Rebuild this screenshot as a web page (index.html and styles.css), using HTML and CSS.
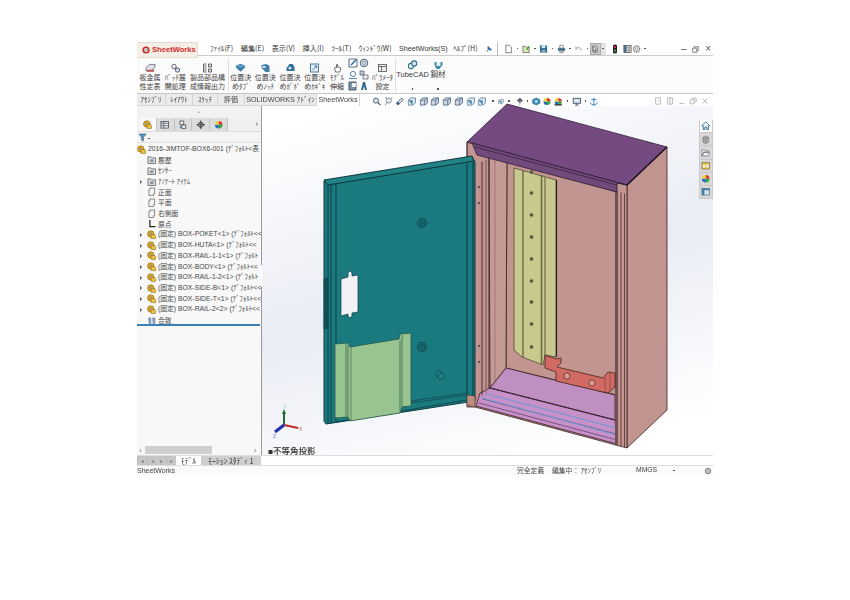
FILE: index.html
```html
<!DOCTYPE html>
<html lang="ja">
<head>
<meta charset="utf-8">
<title>SheetWorks</title>
<link rel="stylesheet" href="styles.css">
</head>
<body>
<svg class="defs" width="0" height="0">
  <defs>
    <symbol id="cube" viewBox="0 0 10 10"><path d="M1 3.5 4 1h5v5.5L6 9H1z" fill="#cfd8e2" stroke="#3f5f7f" stroke-width=".9"/><path d="M1 3.5h5V9M6 3.5 9 1" fill="none" stroke="#3f5f7f" stroke-width=".8"/></symbol>
    <symbol id="cubeb" viewBox="0 0 10 10"><path d="M1 3.5 4 1h5v5.5L6 9H1z" fill="#e4ebf2" stroke="#517792" stroke-width=".9"/><path d="M1 3.5h5V9z" fill="#4e86b0"/></symbol>
    <symbol id="plane" viewBox="0 0 10 10"><path d="M3 1h5v6H7v2H2V3h1z" fill="#f4f4f4" stroke="#666" stroke-width=".8"/></symbol>
    <symbol id="folder" viewBox="0 0 10 10"><path d="M1 2h3l1 1h4v6H1z" fill="#e5e5e5" stroke="#555" stroke-width=".8"/><path d="M3 4.5h4v3H3z" fill="#8d99a8"/></symbol>
    <symbol id="asm" viewBox="0 0 10 10"><circle cx="4" cy="4.2" r="3.4" fill="#e8a817" stroke="#80610e" stroke-width=".6"/><path d="M4 5 8 4.600l1.600 2.400-1.200 2.400-3.800-.4z" fill="#e8c24a" stroke="#80610e" stroke-width=".6"/><circle cx="3.6" cy="3.7" r="1.2" fill="#6f95c2"/></symbol>
    <symbol id="blue" viewBox="0 0 12 10"><path d="M1 2 6 .7 11 2v2.5L6 9 1 4.5z" fill="#3f7fa8"/><path d="M1 2 6 3.5 11 2" fill="none" stroke="#bcd8e8" stroke-width=".7"/></symbol>
    <symbol id="sheet" viewBox="0 0 12 10"><path d="M1 5 5 1h6v3L7 8H1z" fill="#dde" stroke="#445" stroke-width=".7"/><path d="M2 7h8v2H2z" fill="#b55"/></symbol>
    <symbol id="grid" viewBox="0 0 10 10"><rect x="1" y="1.5" width="8" height="7" fill="#eee" stroke="#555" stroke-width=".8"/><path d="M1 3.5h8M4 3.5v5" stroke="#555" stroke-width=".8"/></symbol>
    <symbol id="tube" viewBox="0 0 10 10"><circle cx="3.5" cy="6" r="2.6" fill="#fff" stroke="#2e6c92" stroke-width="1.1"/><circle cx="6.7" cy="3.5" r="2.6" fill="#d7e6f0" stroke="#2e6c92" stroke-width="1.1"/></symbol>
    <symbol id="color" viewBox="0 0 10 10"><path d="M5 1a4 4 0 0 1 4 4H5z" fill="#d33"/><path d="M9 5a4 4 0 0 1-4 4V5z" fill="#3a3"/><path d="M5 9a4 4 0 0 1-4-4h4z" fill="#26c"/><path d="M1 5a4 4 0 0 1 4-4v4z" fill="#ec3"/></symbol>
  </defs>
</svg>

<div class="app">
  <header class="titlebar">
    <div class="logo"><svg class="logo-ic" viewBox="0 0 10 10"><circle cx="5" cy="5" r="3.5" fill="none" stroke="#c62828" stroke-width="2"/><path d="M2 7 8 3" stroke="#888" stroke-width="1.3"/></svg><span>SheetWorks</span></div>
    <nav class="menu">
      <span>ﾌｧｲﾙ(F)</span><span>編集(E)</span><span>表示(V)</span><span>挿入(I)</span><span>ﾂｰﾙ(T)</span><span>ｳｨﾝﾄﾞｳ(W)</span><span class="m-s">SheetWorks(S)</span><span class="m-h">ﾍﾙﾌﾟ(H)</span>
    </nav>
    <div class="quick">
      <svg class="q pin" viewBox="0 0 10 10"><path d="M2 8 5 5M4 2l4 4-2 .5L3.5 4z" stroke="#2a6fb0" stroke-width="1.2" fill="#2a6fb0"/></svg>
      <i class="vsep"></i>
      <svg class="q" viewBox="0 0 10 10"><path d="M2 .8h4l2.2 2.2v6.2H2z" fill="#fff" stroke="#555" stroke-width=".8"/></svg><b class="dot"></b>
      <svg class="q" viewBox="0 0 10 10"><path d="M1 2h3l1 1h3v6H1z" fill="#e8e4b8" stroke="#555" stroke-width=".8"/><path d="M5 6 8 2" stroke="#3a3" stroke-width="1.5"/></svg><b class="dot"></b>
      <svg class="q" viewBox="0 0 10 10"><path d="M1 1h8v8H1z" fill="#2f6f96"/><path d="M3 1h4v3H3z" fill="#dfe9f0"/><path d="M3 6h4v3H3z" fill="#9ab"/></svg><b class="dot"></b>
      <svg class="q" viewBox="0 0 10 10"><path d="M3 1h4v3H3z" fill="#fff" stroke="#555" stroke-width=".7"/><path d="M1 4h8v3H1z" fill="#3d7199"/><path d="M3 7h4v2H3z" fill="#ddd" stroke="#555" stroke-width=".6"/></svg><b class="dot"></b>
      <svg class="q" viewBox="0 0 10 10"><path d="M2 5a3 3 0 0 1 5-1l1 3M2 2v3h3" fill="none" stroke="#bbb" stroke-width="1.2"/></svg><b class="dot"></b>
      <span class="hl"><svg class="q" viewBox="0 0 10 10"><path d="M2 1h5l1 2v6H2z" fill="none" stroke="#666" stroke-width=".7"/><path d="M3 2l4 4-2 .2L5.800 8.500 5 9 4 6.500 3 7.500z" fill="#fff" stroke="#222" stroke-width=".6"/></svg></span><span class="hl2"><b class="dot"></b></span>
      <svg class="q tl" viewBox="0 0 6 10"><rect x="1" y=".5" width="4" height="9" rx="1.5" fill="#222"/><circle cx="3" cy="3" r="1.1" fill="#e33"/><circle cx="3" cy="6.6" r="1.1" fill="#3b3"/></svg>
      <svg class="q" viewBox="0 0 10 10"><rect x="1" y="1" width="8" height="8" fill="#e6e6e6" stroke="#333" stroke-width=".7"/><path d="M1 1h3v8H1z" fill="#4a6a85"/><path d="M5 3h3M5 5h3M5 7h3" stroke="#333" stroke-width=".7"/></svg>
      <svg class="q" viewBox="0 0 10 10"><circle cx="5" cy="5" r="3.6" fill="#ddd" stroke="#777" stroke-width="1.2" stroke-dasharray="1.6 .7"/><circle cx="5" cy="5" r="1.4" fill="#fff" stroke="#777" stroke-width=".6"/></svg><b class="dot"></b>
    </div>
    <div class="winbtns"><span>–</span><svg class="wi" viewBox="0 0 8 8"><path d="M2.5 2.5V.8h4.7v4.4H5.5M.8 2.5h4.7v4.7H.8z" fill="none" stroke="#555" stroke-width=".8"/></svg><span>×</span></div>
  </header>

  <section class="ribbon">
    <div class="rb w26"><svg class="ri" viewBox="0 0 12 10"><use href="#sheet"/></svg><p>板金属<br>性定表</p></div>
    <div class="rb w24"><svg class="ri" viewBox="0 0 10 10"><circle cx="3.5" cy="3.5" r="2.2" fill="#fff" stroke="#445" stroke-width=".8"/><circle cx="7" cy="7" r="2.2" fill="#cfdce8" stroke="#445" stroke-width=".8"/><path d="M5 5l1 1" stroke="#445"/></svg><p>ﾊﾞｯﾁ展<br>開処理</p></div>
    <div class="rb w40"><svg class="ri" viewBox="0 0 10 10"><path d="M1 1h3M1 1v8h3M2 3h2M2 5h2M2 7h2M6 1h3v3H6zM6 6h3v3H6z" fill="#e8e8e8" stroke="#444" stroke-width=".8"/></svg><p>製品部品構<br>成情報出力</p></div>
    <i class="rsep"></i>
    <div class="rb w24"><svg class="ri" viewBox="0 0 12 10"><use href="#blue"/></svg><p>位置決<br>めﾀﾌﾞ</p></div>
    <div class="rb w24"><svg class="ri" viewBox="0 0 10 10"><path d="M1 2 6 1l3 2v6H5L1 5z" fill="#3f7fa8"/><path d="M2 3h3v2H2z" fill="#dce8f0"/></svg><p>位置決<br>めﾉｯﾁ</p></div>
    <div class="rb w25"><svg class="ri" viewBox="0 0 10 10"><path d="M1 8V5l3-4h3l2 3v4z" fill="#2f6d96"/><circle cx="4.5" cy="5" r="1.6" fill="#d0e0ea"/></svg><p>位置決<br>めｶﾞﾎﾞ</p></div>
    <div class="rb w24"><svg class="ri" viewBox="0 0 10 10"><rect x="1" y="1" width="8" height="8" fill="#e8eef4" stroke="#4a7a9a"/><path d="M3 7l4-4M5 3h2v2" stroke="#2f78a8" fill="none"/></svg><p>位置決<br>めｶｷﾞｷ</p></div>
    <div class="rb w20"><svg class="ri" viewBox="0 0 10 10"><path d="M3 9 2 5l1-1 1 1V1.5h1.2V4l3 1v2L7 9z" fill="#fff" stroke="#333" stroke-width=".7"/></svg><p>ﾓﾃﾞﾙ<br>伸縮</p></div>
    <div class="smallgrid">
      <svg viewBox="0 0 10 10"><path d="M1 1h8v8H1z" fill="#fff" stroke="#345" stroke-width=".8"/><path d="M3 7l5-5" stroke="#26a" stroke-width="1.4"/></svg>
      <svg viewBox="0 0 10 10"><circle cx="5" cy="5" r="3.8" fill="#cfdde6" stroke="#456" stroke-width=".9"/><circle cx="5" cy="5" r="1.5" fill="#fff" stroke="#456" stroke-width=".6"/></svg>
      <svg viewBox="0 0 10 10"><circle cx="5" cy="4" r="2.6" fill="#fff" stroke="#47a" stroke-width=".9"/><path d="M1 8.5h8" stroke="#47a" stroke-width=".9"/></svg>
      <svg viewBox="0 0 10 10"><path d="M1 1h4v4H1z" fill="#bcd" stroke="#456" stroke-width=".7"/><path d="M4 5h5v4H4z" fill="#eee" stroke="#456" stroke-width=".7"/></svg>
      <svg viewBox="0 0 10 10"><path d="M1 1h7v8H1z" fill="#7d98ad" stroke="#334" stroke-width=".8"/><path d="M4 2h4v4H4z" fill="#eee"/></svg>
      <svg viewBox="0 0 10 10"><path d="M2 9 4 1h2l2 8H6L5 5 4 9z" fill="#2a6a8c"/></svg>
    </div>
    <div class="rb w25"><svg class="ri" viewBox="0 0 10 10"><use href="#grid"/></svg><p>ﾊﾟﾗﾒｰﾀ<br>設定</p></div>
    <i class="rsep"></i>
    <div class="rb w33 solo"><svg class="ri" viewBox="0 0 10 10"><use href="#tube"/></svg><p class="big">TubeCAD</p><b class="dot"></b></div>
    <div class="rb w18 solo"><svg class="ri" viewBox="0 0 10 10"><path d="M1 2h8v3L6 9H3L1 5z" fill="#3f8aa8"/><path d="M3 2v4h4V2" fill="#e7f0f4"/></svg><p class="big">鋼材</p><b class="dot"></b></div>
  </section>

  <nav class="tabs">
    <span class="tab t29">ｱｾﾝﾌﾞﾘ</span><span class="tab t27">ﾚｲｱｳﾄ</span><span class="tab t25">ｽｹｯﾁ</span><span class="tab t27">評価</span><span class="tab t72">SOLIDWORKS ｱﾄﾞｲﾝ</span><span class="tab t43 on">SheetWorks</span>
  </nav>

  <main class="main">
    <aside class="side">
      <div class="grip">•</div>
      <div class="ptabs">
        <span class="ptab on"><svg viewBox="0 0 10 10"><use href="#asm"/></svg></span>
        <span class="ptab"><svg viewBox="0 0 10 10"><rect x="1" y="1.5" width="8" height="7" fill="#e8eef0" stroke="#445" stroke-width=".8"/><path d="M1 3.5h8M1 6h8M4 1.500v7" stroke="#445" stroke-width=".7"/></svg></span>
        <span class="ptab"><svg viewBox="0 0 10 10"><path d="M2 1h4v4H2zM4 5h4v4H4z" fill="#eee" stroke="#444" stroke-width=".8"/><circle cx="3" cy="7.500" r="1.200" fill="#4a86b0"/></svg></span>
        <span class="ptab"><svg viewBox="0 0 10 10"><circle cx="5" cy="5" r="2.600" fill="none" stroke="#333"/><path d="M5 .5v9M.5 5h9" stroke="#333"/></svg></span>
        <span class="ptab"><svg viewBox="0 0 10 10"><use href="#color"/></svg></span>
        <span class="more">›</span>
      </div>
      <div class="filter"><svg viewBox="0 0 10 10"><path d="M1 1h8L6 5v4L4 8V5z" fill="#4f93c2" stroke="#3a5a70" stroke-width=".6"/></svg><b class="dot"></b></div>
      <ul class="tree">
        <li class="root"><svg class="ti" viewBox="0 0 10 10"><use href="#asm"/></svg><span>2016-JIMTOF-BOX6-001 (ﾃﾞﾌｫﾙﾄ&lt;表</span></li>
        <li class="sub"><svg class="ti" viewBox="0 0 10 10"><use href="#folder"/></svg><span>履歴</span></li>
        <li class="sub"><svg class="ti" viewBox="0 0 10 10"><use href="#folder"/></svg><span>ｾﾝｻｰ</span></li>
        <li class="sub arrow"><svg class="ti" viewBox="0 0 10 10"><use href="#folder"/></svg><span>ｱﾉﾃｰﾄ ｱｲﾃﾑ</span></li>
        <li class="sub"><svg class="ti" viewBox="0 0 10 10"><use href="#plane"/></svg><span>正面</span></li>
        <li class="sub"><svg class="ti" viewBox="0 0 10 10"><use href="#plane"/></svg><span>平面</span></li>
        <li class="sub"><svg class="ti" viewBox="0 0 10 10"><use href="#plane"/></svg><span>右側面</span></li>
        <li class="sub"><svg class="ti" viewBox="0 0 10 10"><path d="M3 1v7h6" fill="none" stroke="#222" stroke-width="1.300"/></svg><span>原点</span></li>
        <li class="part arrow"><svg class="ti" viewBox="0 0 10 10"><use href="#asm"/></svg><span>(固定) BOX-POKET&lt;1&gt; (ﾃﾞﾌｫﾙﾄ&lt;&lt;</span></li>
        <li class="part arrow"><svg class="ti" viewBox="0 0 10 10"><use href="#asm"/></svg><span>(固定) BOX-HUTA&lt;1&gt; (ﾃﾞﾌｫﾙﾄ&lt;&lt;</span></li>
        <li class="part arrow"><svg class="ti" viewBox="0 0 10 10"><use href="#asm"/></svg><span>(固定) BOX-RAIL-1-1&lt;1&gt; (ﾃﾞﾌｫﾙﾄ</span></li>
        <li class="part arrow"><svg class="ti" viewBox="0 0 10 10"><use href="#asm"/></svg><span>(固定) BOX-BODY&lt;1&gt; (ﾃﾞﾌｫﾙﾄ&lt;&lt;</span></li>
        <li class="part arrow"><svg class="ti" viewBox="0 0 10 10"><use href="#asm"/></svg><span>(固定) BOX-RAIL-1-2&lt;1&gt; (ﾃﾞﾌｫﾙﾄ</span></li>
        <li class="part arrow"><svg class="ti" viewBox="0 0 10 10"><use href="#asm"/></svg><span>(固定) BOX-SIDE-B&lt;1&gt; (ﾃﾞﾌｫﾙﾄ&lt;&lt;</span></li>
        <li class="part arrow"><svg class="ti" viewBox="0 0 10 10"><use href="#asm"/></svg><span>(固定) BOX-SIDE-T&lt;1&gt; (ﾃﾞﾌｫﾙﾄ&lt;&lt;</span></li>
        <li class="part arrow"><svg class="ti" viewBox="0 0 10 10"><use href="#asm"/></svg><span>(固定) BOX-RAIL-2&lt;2&gt; (ﾃﾞﾌｫﾙﾄ&lt;&lt;</span></li>
        <li class="sub"><svg class="ti" viewBox="0 0 10 10"><path d="M1.500 2h2.500v7H2.500zM6 2h2.500L8 9H6.500z" fill="#7fb0d0" stroke="#557" stroke-width=".5"/></svg><span>合致</span></li>
      </ul>
      <div class="treeline"></div>
      <div class="handle"></div>
      <div class="hscroll"><span class="sa">‹</span><span class="thumb"></span><span class="sa r">›</span></div>
    </aside>

    <div class="view">
      <svg class="scene" viewBox="262 106 451 349" preserveAspectRatio="none">
        <defs>
          <g id="ring"><circle r="4.600" fill="none" stroke="#0c3c40" stroke-width=".8"/><circle r="3" fill="none" stroke="#0c3c40" stroke-width=".7"/><circle r="1.300" fill="none" stroke="#0c3c40" stroke-width=".7"/></g>
        </defs>
        <g stroke="#3a2222" stroke-width=".8" stroke-linejoin="round">
          <polygon points="627,185 667,147 667,410 627,448" fill="#c19490"/>
          <polygon points="467,142 627,185 627,448 475,407 467,407" fill="#c39490"/>
          <polygon points="507,160 617,192 617,395 506,368" fill="#c39590"/>
          <polygon points="489,155 507,160 506,368 490,388" fill="#c59a95"/>
          <polygon points="506,368 615,395 615,420 490,388" fill="#c08fc2"/>
          <polygon points="490,388 615,420 617,444 476,406 480,393" fill="#c690c8"/>
        </g>
        <g fill="none" stroke-linecap="round">
          <path d="M483,399 616,434M479,403 617,440" stroke="#5b3a62" stroke-width=".7"/>
          <path d="M487,394 616,428M482,398 617,435" stroke="#6b9ad2" stroke-width="1"/>
          <path d="M490,388 615,420" stroke="#402a40" stroke-width="1.200"/>
          <path d="M482,162V395M489,158V388" stroke="#3a2222" stroke-width=".9"/>
          <path d="M486,160V392" stroke="#8d6c6a" stroke-width="1.500"/>
          <path d="M616.500,192V444" stroke="#6e5150" stroke-width="3"/>
          <path d="M621,193V446M624.500,194V447" stroke="#3a2222" stroke-width=".7"/>
          <path d="M495,160V380" stroke="#8d6c6a" stroke-width=".7"/>
        </g>
        <polygon points="514,168 556,180 556,357 545,355 543,365 522,357 514,350" fill="#c9c98f" stroke="#3c3c24" stroke-width=".7"/>
        <g fill="none">
          <path d="M523,171V358" stroke="#5d5d3a" stroke-width="1.200"/>
          <path d="M541.500,175V364" stroke="#6a6a44" stroke-width="1.600"/>
          <path d="M545,176V355" stroke="#7a7a50" stroke-width="1.400"/>
          <path d="M556.500,180V357" stroke="#2c2420" stroke-width="1.200"/>
        </g>
        <g fill="#4a4a30" stroke="#8a8a60" stroke-width=".6">
          <circle cx="531.500" cy="172" r="1.700"/><circle cx="531.500" cy="193" r="1.700"/><circle cx="531.500" cy="215" r="1.700"/><circle cx="531.500" cy="237" r="1.700"/><circle cx="531.500" cy="259" r="1.700"/><circle cx="531.500" cy="281" r="1.700"/><circle cx="531.500" cy="302" r="1.700"/><circle cx="531.500" cy="324" r="1.700"/><circle cx="531.500" cy="347" r="1.700"/>
        </g>
        <polygon points="545,355 556,359 561,358 561,363 557,367 603,378 608,372 615,373 615,387 608,393 603,392 556,381 556,372 545,368" fill="#d06a62" stroke="#4a2420" stroke-width=".8"/>
        <g fill="#e09a90" stroke="#4a2420" stroke-width=".7">
          <ellipse cx="567" cy="376" rx="3" ry="3.200"/><ellipse cx="592" cy="383" rx="3" ry="3.200"/>
        </g>
        <path d="M605,392V378M610,391V372" stroke="#8e4640" stroke-width=".8" fill="none"/>
        <g stroke="#2f1d33" stroke-width=".8" stroke-linejoin="round">
          <polygon points="467,142 507,104 667,147 627,185" fill="#744a80"/>
          <polygon points="472,143 627,185 617,183 617,192 477,155" fill="#6f4a7b"/>
        </g>
        <path d="M475,147 617,185" stroke="#2f1d33" stroke-width=".7" fill="none"/>
        <path d="M467,142V160" stroke="#3a2222" stroke-width=".7"/>
        <path d="M627,185 667,147" stroke="#1a0f1f" stroke-width="1.400"/>
        <g fill="#3d2a2a"><circle cx="479" cy="187" r=".9"/><circle cx="479" cy="203" r=".9"/><circle cx="479" cy="346" r=".9"/><circle cx="479" cy="362" r=".9"/></g>
        <polygon points="324,181 472,157 475,162 475,401 326,424 324,421" fill="#1b7a80" stroke="#0c3c40" stroke-width="1"/>
        <polygon points="324,180 472,156 474,161 328,185" fill="#1f8388" stroke="#0a2e30" stroke-width=".9"/>
        <g fill="none" stroke="#0c3c40">
          <path d="M328,185V424M331,185V423M336,183V422" stroke-width=".9"/>
          <path d="M467,163V398M473,162V400" stroke-width="1.100"/>
          <path d="M336,422 467,400" stroke-width=".8"/>
          <path d="M411,403 467,395M411,401 467,393" stroke-width=".6"/>
        </g>
        <polygon points="324,279 328,278 328,328 324,329" fill="#0e5256" stroke="#0c3c40" stroke-width=".6"/>
        <path d="M341,279 348,277V273L350,271 352,273V276L358,275V312L352,313V316L350,318 348,316V314L341,316z" fill="#f2f2f6" stroke="#0c3c40" stroke-width=".7"/>
        <use href="#ring" x="422" y="223"/>
        <use href="#ring" x="422" y="347"/>
        <g fill="#1f8388" stroke="#0c3c40" stroke-width=".7"><circle cx="439" cy="374" r="3"/><circle cx="441" cy="376.500" r="3"/></g>
        <polygon points="335,344 348,343 350,347 399,339 400,334 411,333 411,406 402,407 400,413 350,421 348,417 335,418" fill="#98c490" stroke="#1d4d40" stroke-width=".7"/>
        <g fill="none" stroke="#4f7a58">
          <path d="M346,344V417M348,345V417" stroke-width="1"/>
          <path d="M351,347V421" stroke-width=".8"/>
          <path d="M400,340V413M402,335V407" stroke-width="1"/>
        </g>
        <polygon points="467,395 475,396 475,407 467,405" fill="#bf8f80" stroke="#3a2222" stroke-width=".5"/>
        <g stroke-width="2" fill="none">
          <path d="M284,425V412" stroke="#1c6f2c"/>
          <path d="M284,425 298,428" stroke="#c02a2a"/>
          <path d="M284,425 275,432" stroke="#2030b0" stroke-width="3"/>
        </g>
        <path d="M282,414 284,409 286,414z" fill="#1c6f2c"/>
        <text x="283" y="408.500" class="ax y">Y</text><text x="299" y="431" class="ax x">X</text><text x="273" y="438" class="ax z">Z</text>
      </svg>

      <div class="viewbar">
        <svg class="c12" viewBox="0 0 10 10"><circle cx="4" cy="4" r="2.800" fill="#dce8f2" stroke="#456"/><path d="M6 6 9 9" stroke="#456" stroke-width="1.400"/></svg>
        <svg class="c12" viewBox="0 0 10 10"><circle cx="5" cy="4" r="2.800" fill="#eee" stroke="#789"/><path d="M3 6 1 9M1 1h2M7 1h2" stroke="#789"/></svg>
        <svg class="c12" viewBox="0 0 10 10"><path d="M1 7 7 1l2 2-6 6z" fill="#dde" stroke="#567"/><circle cx="3" cy="7" r="1.500" fill="#468"/></svg>
        <svg class="c12" viewBox="0 0 10 10"><use href="#cubeb"/></svg>
        <svg class="c12" viewBox="0 0 10 10"><use href="#cube"/></svg>
        <svg class="c12" viewBox="0 0 10 10"><use href="#cube"/></svg>
        <svg class="c12" viewBox="0 0 10 10"><use href="#cube"/></svg>
        <svg class="c12" viewBox="0 0 10 10"><use href="#cube"/></svg>
        <svg class="c12" viewBox="0 0 10 10"><use href="#cubeb"/></svg>
        <svg class="c12" viewBox="0 0 10 10"><use href="#cubeb"/></svg>
        <span class="c10"><b class="dot"></b></span>
        <svg class="c6" viewBox="0 0 10 10"><use href="#cubeb"/></svg>
        <span class="c10"><b class="dot"></b></span>
        <svg class="c12" viewBox="0 0 10 10"><path d="M5 1 8 4 5 6 2 4zM5 6V9" fill="#667" stroke="#445" stroke-width=".6"/></svg>
        <span class="c4"><b class="dot"></b></span>
        <svg class="c13" viewBox="0 0 10 10"><path d="M5 1 9 3v4L5 9 1 7V3z" fill="#3e8fbf" stroke="#2a5f80" stroke-width=".7"/><circle cx="5" cy="5" r="1.500" fill="#cfe3ef"/></svg>
        <svg class="c10" viewBox="0 0 10 10"><use href="#color"/></svg>
        <svg class="c13" viewBox="0 0 10 10"><use href="#color"/><path d="M1 8h8v1.500H1z" fill="#333"/></svg>
        <span class="c6"><b class="dot"></b></span>
        <svg class="c12" viewBox="0 0 10 10"><rect x="1" y="1.500" width="8" height="5.500" fill="#dde6ee" stroke="#456"/><path d="M5 7v2M3 9h4" stroke="#456"/></svg>
        <span class="c6"><b class="dot"></b></span>
        <svg class="c12" viewBox="0 0 10 10"><path d="M5 1V9M2 3h6M1 6q1 3 4 3t4-3" fill="none" stroke="#2a7ab0" stroke-width="1"/></svg>
      </div>
      <div class="viewwin">
        <svg viewBox="0 0 10 10"><path d="M2 1h6v8H2zM4 5h2" fill="none" stroke="#aaa"/></svg>
        <svg viewBox="0 0 10 10"><path d="M2 1h6v8H2zM5 1v8" fill="none" stroke="#aaa"/></svg>
        <svg viewBox="0 0 10 10"><path d="M2 8h6" stroke="#aaa"/></svg>
        <svg viewBox="0 0 10 10"><path d="M4 3V1.500h5V6H7M1.500 3.500h5V8.500h-5z" fill="none" stroke="#aaa"/></svg>
        <svg viewBox="0 0 10 10"><path d="M2 2l6 6M8 2 2 8" stroke="#aaa"/></svg>
      </div>
      <div class="panel">
        <span class="pb first"><svg viewBox="0 0 10 10"><path d="M5 1 .8 5H2.300V9H4V6.500h2V9h1.700V5H9.200z" fill="#fff" stroke="#2a6a8c" stroke-width="1"/></svg></span>
        <span class="pb"><svg viewBox="0 0 10 10"><path d="M2 2.500 5 1l3 1.500v5L5 9 2 7.500z" fill="#aaa" stroke="#777" stroke-width=".7"/><path d="M2 2.500 5 4l3-1.500M5 4v5" stroke="#777" stroke-width=".6" fill="none"/></svg></span>
        <span class="pb"><svg viewBox="0 0 10 10"><path d="M1 2h3l1 1h3v1.500H3L1 8.500zM3 4.500h6L7.500 8.500H1z" fill="#eee" stroke="#667" stroke-width=".7"/></svg></span>
        <span class="pb"><svg viewBox="0 0 10 10"><rect x="1" y="1.500" width="8" height="7" fill="#e3b62e" stroke="#665" stroke-width=".6"/><path d="M2 3.500h2.500V7H2zM5.500 3.500H8V7H5.500z" fill="#eee"/></svg></span>
        <span class="pb"><svg viewBox="0 0 10 10"><use href="#color"/></svg></span>
        <span class="pb"><svg viewBox="0 0 10 10"><rect x="1" y="1.500" width="8" height="7" fill="#cfe0ea" stroke="#567" stroke-width=".7"/><path d="M1 1.500h8V3.500H1zM1 3.500h2.500v5H1z" fill="#3e7ea8"/></svg></span>
      </div>
      <div class="viewname"><b>■</b>不等角投影</div>
    </div>
  </main>

  <div class="bottomtabs">
    <div class="navbtns"><i>◂</i><i>◂</i><i>▸</i><i>▸</i></div>
    <span class="btab on">ﾓﾃﾞﾙ</span>
    <span class="btab">ﾓｰｼｮﾝ ｽﾀﾃﾞｨ 1</span>
  </div>
  <footer class="status">
    <span class="s-name">SheetWorks</span>
    <span class="s-a">完全定義</span>
    <span class="s-b">編集中： ｱｾﾝﾌﾞﾘ</span>
    <span class="s-c">MMGS</span>
    <b class="dot s-d"></b>
    <svg class="s-e" viewBox="0 0 10 10"><circle cx="5" cy="5" r="3.500" fill="#bbb" stroke="#777"/></svg>
  </footer>
</div>
</body>
</html>
```

FILE: styles.css
```css
* { box-sizing: border-box; }
html, body { margin: 0; padding: 0; background: #fff; }
body {
  width: 850px;
  height: 600px;
  overflow: hidden;
  padding: 42px 137px 0;
  font-family: "Noto Sans CJK JP", "Liberation Sans", sans-serif;
  color: #333;
}
.defs { display: block; height: 0; }
.app {
  width: 576px;
  height: 433px;
  display: flex;
  flex-direction: column;
  filter: blur(.35px);
  font-size: 7px;
  line-height: 1;
}
.dot { display: block; width: 2px; height: 2px; background: #555; flex: none; }

/* title row */
.titlebar { height: 14px; display: flex; align-items: center; background: #fff; position: relative; border-bottom: 1px solid #ccc; }
.logo {
  width: 61px; height: 16px; margin-bottom: -2px; flex: none;
  background: #f4eee6; border: 1px solid #e2dcd2; border-left: 0;
  display: flex; align-items: center; gap: 2px; padding-left: 5px;
  font: bold 7.600px "Liberation Sans", sans-serif; color: #d62b2b;
  position: relative; z-index: 1;
}
.logo-ic { width: 8px; height: 8px; }
.menu { display: flex; gap: 7.500px; margin-left: 12px; font-size: 7.200px; flex: none; width: 267px; }
.menu span { white-space: nowrap; }
.menu .m-s { font-family: "Liberation Sans", sans-serif; }
.menu .m-h { margin-left: -2px; }
.quick { display: flex; align-items: center; flex: none; margin-left: 8px; height: 13px; }
.q { width: 9px; height: 10px; flex: none; }
.quick .dot { margin: 0 3.500px; width: 1.500px; height: 1.500px; }
.pin { width: 8px; }
.vsep { width: 1px; height: 14px; background: #bbb; margin: 0 6px 0 4px; }
.hl { background: #c9c9c9; border: 1px solid #aaa; width: 11px; height: 12px; display: flex; align-items: center; justify-content: center; margin-left: -2px; }
.hl .q { width: 8px; }
.hl2 { width: 5px; height: 12px; background: #e3e3e3; display: flex; align-items: center; margin-right: 6px; }
.hl2 .dot { margin: 0 1.500px; }
.tl { width: 6px; margin-right: 5px; }
.winbtns { position: absolute; left: 542px; top: 1px; width: 34px; display: flex; align-items: center; justify-content: space-between; font: 10px/12px "Liberation Sans", sans-serif; color: #555; padding: 0 2px; }
.wi { width: 7px; height: 7px; }

/* ribbon */
.ribbon { height: 38px; display: flex; background: #fbfbfb; border-bottom: 1px solid #c8c8c8; }
.rb { flex: none; display: flex; flex-direction: column; align-items: center; padding-top: 7px; }
.rb p { margin: 0; font-size: 7px; line-height: 9px; text-align: center; white-space: nowrap; color: #3c3c3c; }
.rb p.big { font-size: 7.500px; margin-top: 0; line-height: 10px; font-family: "Liberation Sans", "Noto Sans CJK JP", sans-serif; }
.rb .dot { margin-top: 8px; width: 1.500px; height: 1.500px; }
.ri { width: 11px; height: 10px; }
.solo { padding-top: 4px; }
.w18 { width: 18px; } .w20 { width: 20px; } .w24 { width: 24.500px; } .w25 { width: 25px; } .w26 { width: 26px; } .w33 { width: 33px; } .w40 { width: 40px; }
.rsep { width: 1px; flex: none; background: #ddd; margin: 2px 0; }
.smallgrid { width: 23px; flex: none; display: grid; grid-template-columns: 11px 11px; grid-auto-rows: 11.500px; align-content: start; padding: 2px 0 0 1px; }
.smallgrid svg { width: 10px; height: 10px; }

/* tabs */
.tabs { height: 12px; display: flex; background: #fff; }
.tab { flex: none; display: flex; align-items: center; justify-content: center; background: #ebebeb; border: 1px solid #d4d4d4; border-top: 0; border-left: 0; font-size: 7px; white-space: nowrap; color: #444; }
.tab.on { background: #fff; border-bottom: 0; }
.t29 { width: 29px; } .t27 { width: 27px; } .t25 { width: 25px; } .t72 { width: 72px; } .t43 { width: 43px; }
.tabs .tab:nth-child(n+5) { font-family: "Liberation Sans", "Noto Sans CJK JP", sans-serif; font-size: 7.200px; }

/* main */
.main { height: 349px; display: flex; }
.side { width: 125px; flex: none; background: #f8f8f8; border-right: 1px solid #9a9a9a; display: flex; flex-direction: column; position: relative; }
.grip { height: 12px; text-align: center; color: #999; font-size: 6px; line-height: 12px; background: #f2f2f2; }
.ptabs { height: 13px; display: flex; background: #f0f0f0; padding-left: 2px; align-items: stretch; }
.ptab { width: 17.800px; flex: none; display: flex; align-items: center; justify-content: center; border-right: 1px solid #c4c4c4; background: #dcdcdc; }
.ptab.on { background: #f8f8f8; }
.ptab svg { width: 9.500px; height: 9.500px; }
.more { margin-left: auto; width: 30px; font-size: 9px; color: #555; text-align: right; padding: 1px 3px 0 0; }
.filter { height: 12px; border: 1px solid #ddd; border-width: 1px 0; display: flex; align-items: center; gap: 1px; padding-left: 1px; background: #f4f4f4; }
.filter svg { width: 9px; height: 9px; }
.filter .dot { width: 1.500px; height: 1.500px; margin-top: 3px; }
.tree { list-style: none; margin: 1px 0 0; padding: 0; background: #f8f8f8; overflow: hidden; flex: none; }
.tree li { height: 10.700px; display: flex; align-items: center; white-space: nowrap; position: relative; overflow: hidden; font-size: 6.800px; color: #444; padding-left: 10px; width: 124px; }
.tree li span { display: block; font-size: 6.800px; }
.tree li.root { padding-left: 0; font-family: "Liberation Sans", "Noto Sans CJK JP", sans-serif; }
.tree li.part { padding-left: 10px; font-family: "Liberation Sans", "Noto Sans CJK JP", sans-serif; }
.ti { width: 9.500px; height: 9.500px; flex: none; margin-right: 1.500px; }
.arrow::before { content: ""; position: absolute; left: 3px; top: 3.500px; border-left: 2.500px solid #555; border-top: 2px solid transparent; border-bottom: 2px solid transparent; }
.treeline { height: 2px; background: #3a7fb8; margin: -2px 1px 0 0; position: relative; }
.handle { position: absolute; right: -6px; top: 159px; width: 6px; height: 22px; background: #fff; border: 1px solid #ddd; border-left: 0; }
.hscroll { position: absolute; left: 0; right: 1px; bottom: 1px; height: 8px; display: flex; align-items: center; font-size: 8px; color: #555; }
.sa { width: 7px; text-align: center; flex: none; }
.sa.r { margin-left: auto; width: 10px; }
.thumb { width: 67px; height: 8px; background: #cfcfcf; margin-left: 1px; }

/* viewport */
.view { flex: 1; position: relative; background: linear-gradient(165deg, #fff 5%, #e9ecf4 50%, #fff 92%); }
.scene { display: block; width: 100%; height: 100%; overflow: visible; }
.ax { font: 5px "Liberation Sans", sans-serif; }
.ax.y { fill: #6da; } .ax.x { fill: #d55; } .ax.z { fill: #77c; }
.viewbar { position: absolute; left: 109px; top: -11px; height: 12px; display: flex; align-items: center; }
.viewbar > * { flex: none; display: flex; align-items: center; justify-content: center; height: 9px; }
.viewbar .dot { width: 1.500px; height: 1.500px; }
.c12 { width: 11.700px; } .c10 { width: 10px; } .c6 { width: 6px; overflow: visible; } .c4 { width: 4px; } .c13 { width: 12.500px; }
.viewwin { position: absolute; right: 4px; top: -9.500px; width: 55px; display: flex; justify-content: space-between; }
.viewwin svg { width: 8px; height: 8px; }
.panel { position: absolute; left: 437px; top: 14px; width: 14px; display: flex; flex-direction: column; background: #d8d8d8; }
.pb { height: 13.200px; display: flex; align-items: center; justify-content: center; border: 1px solid #c8c8c8; border-top: 0; }
.pb.first { background: #fff; }
.pb svg { width: 9.500px; height: 9.500px; }
.viewname { position: absolute; left: 6px; bottom: -1px; font-size: 8.500px; font-weight: 500; line-height: 10px; color: #333; }
.viewname b { font-size: 5px; vertical-align: 1px; }

/* bottom */
.bottomtabs { height: 11px; display: flex; border-bottom: 1px solid #ddd; border-top: 1px solid #ddd; background: #fff; width: 100%; }
.navbtns { width: 39px; background: #bbb; display: flex; padding-left: 1px; }
.navbtns i { width: 9px; margin-right: .5px; background: #c6c6c6; font-style: normal; font-size: 6px; color: #888; text-align: center; line-height: 9px; }
.btab { display: flex; align-items: center; justify-content: center; background: #cfcfcf; width: 60px; font-size: 7.600px; color: #333; white-space: nowrap; }
.btab.on { background: #fff; width: 25px; }
.status { height: 9px; background: #fafafa; position: relative; display: flex; align-items: center; font-size: 6.800px; color: #444; }
.s-name { font-family: "Liberation Sans", sans-serif; font-size: 7px; width: 380px; }
.s-a { width: 35px; }
.s-b { width: 84px; }
.s-c { font-family: "Liberation Sans", sans-serif; width: 37px; }
.s-d { width: 1.500px; height: 1.500px; margin-right: 29px; }
.s-e { width: 8px; height: 8px; }
```
